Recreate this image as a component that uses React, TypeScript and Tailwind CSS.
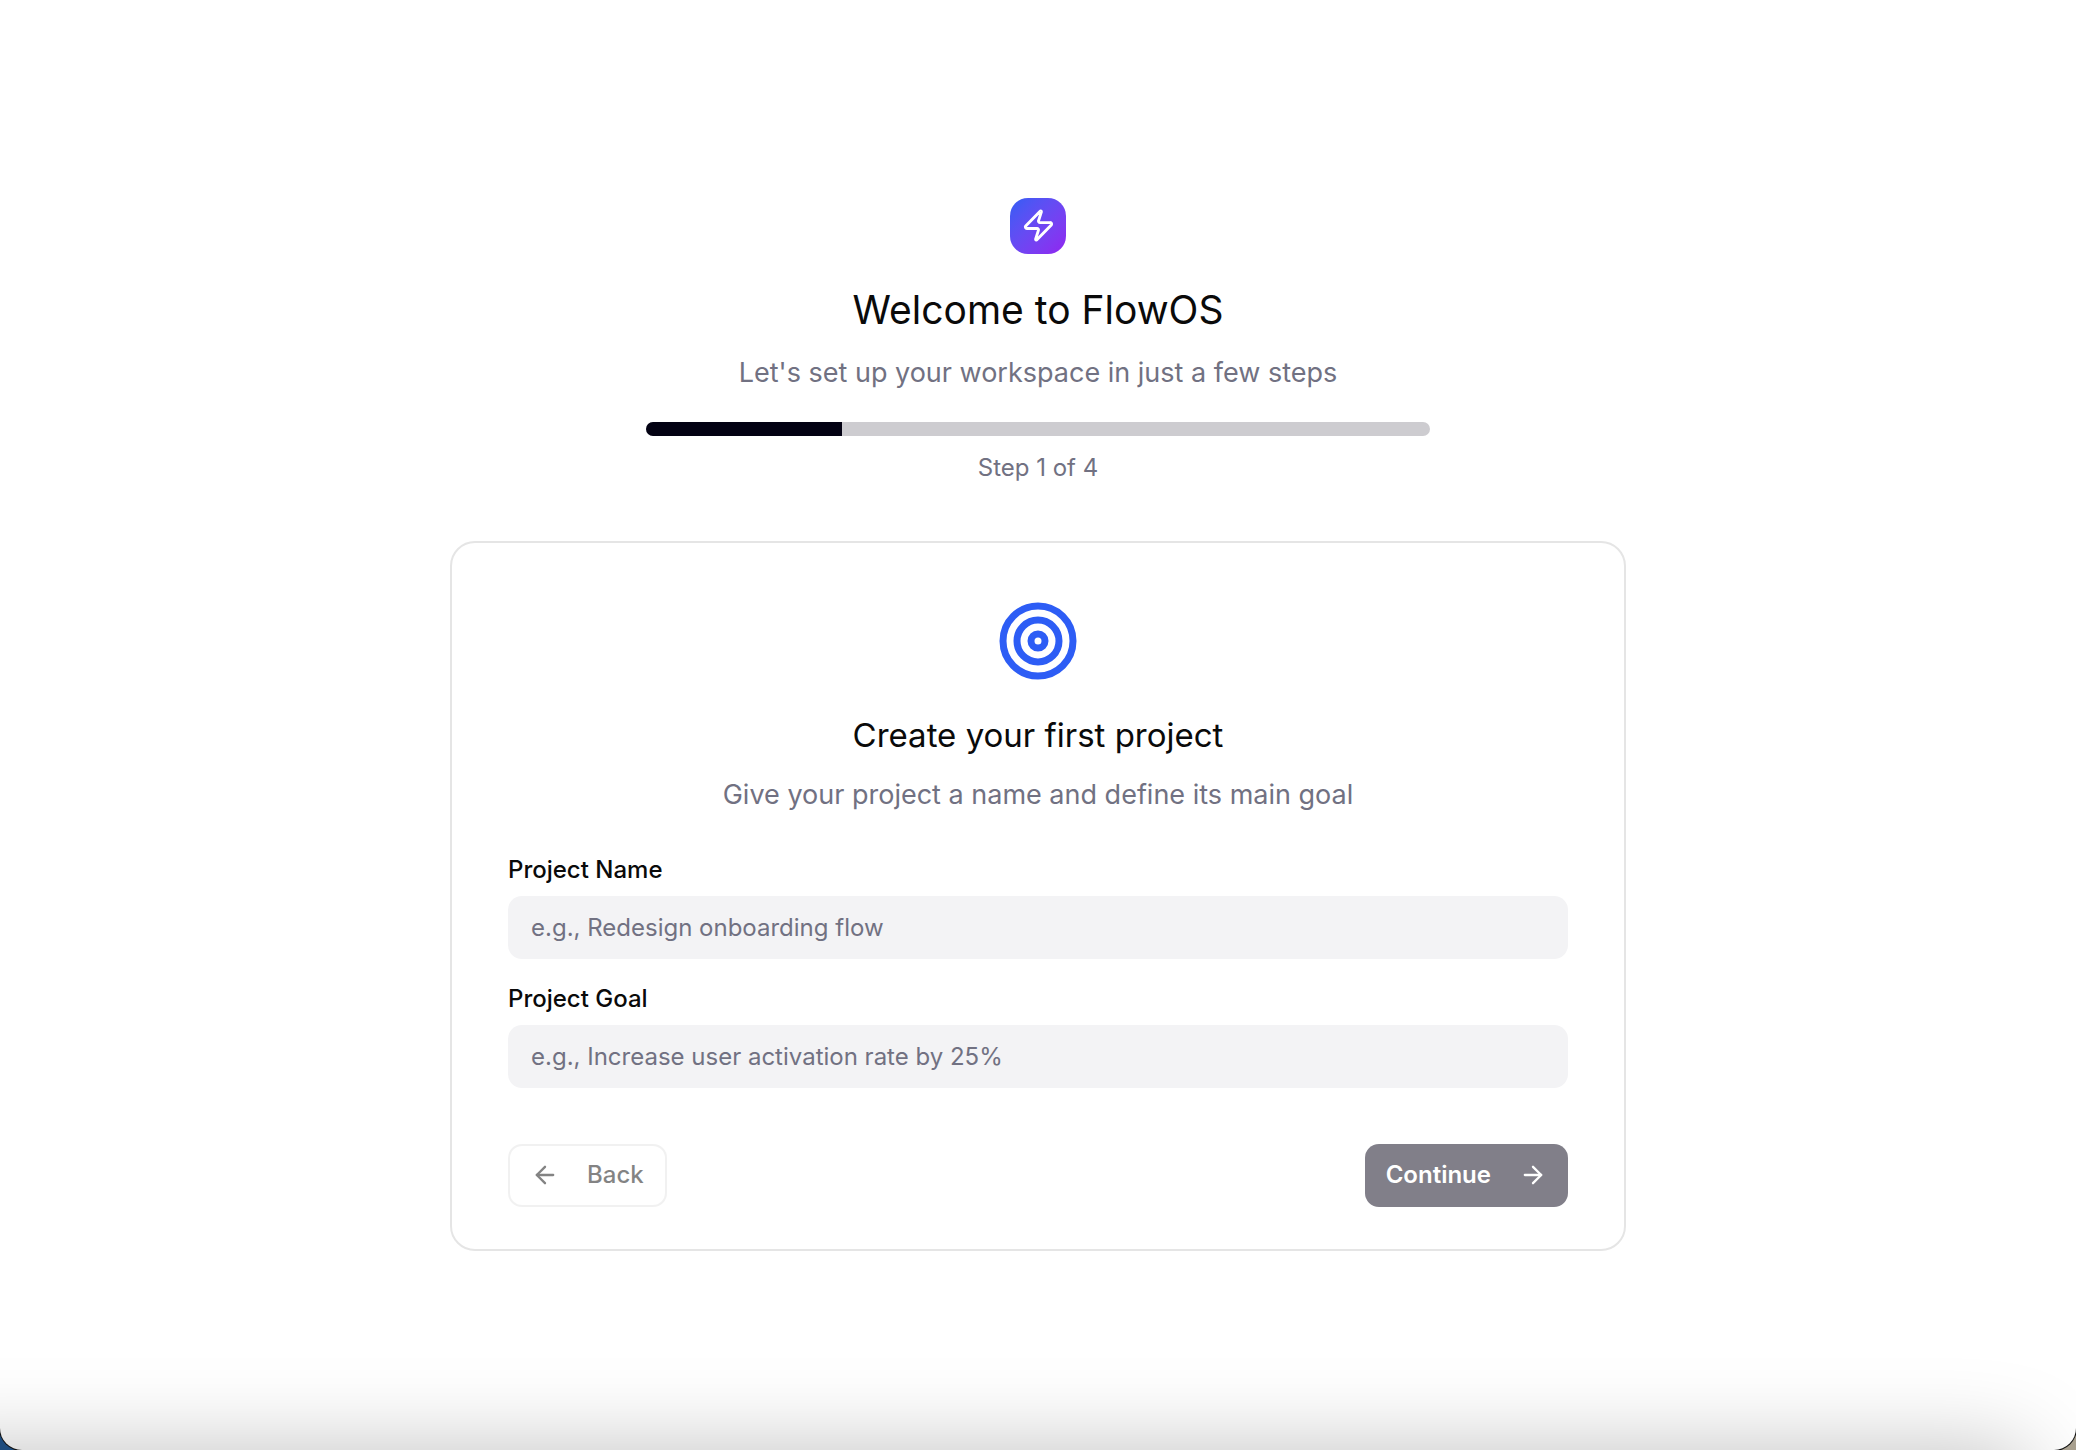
import { useState } from 'react'
import { ArrowLeft, ArrowRight, Target, Zap } from 'lucide-react'

const TOTAL_STEPS = 4

type FieldProps = {
  id: string
  label: string
  placeholder: string
  value: string
  onChange: (value: string) => void
}

function Field({ id, label, placeholder, value, onChange }: FieldProps) {
  return (
    <div className="flex flex-col gap-3.5">
      <label htmlFor={id} className="text-[24px] leading-6 font-medium text-neutral-950">
        {label}
      </label>
      <input
        id={id}
        type="text"
        value={value}
        onChange={(e) => onChange(e.target.value)}
        placeholder={placeholder}
        className="h-[63px] w-full rounded-[14px] bg-[#f3f3f5] px-[23px] text-[24px] text-neutral-950 outline-none placeholder:text-[#717182]"
      />
    </div>
  )
}

export default function App() {
  const [step, setStep] = useState(1)
  const [name, setName] = useState('')
  const [goal, setGoal] = useState('')

  const canContinue = name.trim() !== '' && goal.trim() !== ''

  return (
    <div className="bg-linear-to-r from-[#1d4b7d] from-50% to-[#a8a08f] to-50% font-['Inter','Liberation_Sans',sans-serif]">
      <div className="relative flex min-h-screen flex-col items-center justify-center overflow-hidden rounded-b-[22px] bg-white pb-0.5 shadow-[0_0_0_1px_#111]">
        <main className="flex w-full max-w-[1176px] flex-col gap-14">
          <header className="flex flex-col items-center text-center">
            <div className="flex size-14 items-center justify-center rounded-[18px] bg-linear-to-br from-[#2d5df5] to-[#9022f0]">
              <Zap className="size-[35px] text-white" />
            </div>
            <h1 className="mt-7 text-[39px] leading-14 text-neutral-950">Welcome to FlowOS</h1>
            <p className="mt-3.5 text-[27px] leading-[42px] text-[#717182]">
              Let&apos;s set up your workspace in just a few steps
            </p>
            <div
              role="progressbar"
              aria-label="Setup progress"
              aria-valuemin={0}
              aria-valuemax={TOTAL_STEPS}
              aria-valuenow={step}
              className="mt-7 h-3.5 w-full max-w-[784px] overflow-hidden rounded-full bg-[#cdccd0]"
            >
              <div className="h-full bg-[#030213]" style={{ width: `${(step / TOTAL_STEPS) * 100}%` }} />
            </div>
            <p className="mt-3.5 text-[24px] leading-[35px] text-[#717182]">
              Step {step} of {TOTAL_STEPS}
            </p>
          </header>

          <section className="rounded-[25px] border-2 border-[#e5e5e5] bg-white px-[56px] pt-14 pb-[42px]">
            <div className="flex flex-col items-center text-center">
              <Target className="size-[84px] text-[#2d5df5]" />
              <h2 className="mt-7 text-[33px] leading-[49px] text-neutral-950">Create your first project</h2>
              <p className="mt-3.5 text-[27px] leading-[42px] text-[#717182]">
                Give your project a name and define its main goal
              </p>
            </div>

            <div className="mt-[42px] flex flex-col gap-7">
              <Field
                id="project-name"
                label="Project Name"
                placeholder="e.g., Redesign onboarding flow"
                value={name}
                onChange={setName}
              />
              <Field
                id="project-goal"
                label="Project Goal"
                placeholder="e.g., Increase user activation rate by 25%"
                value={goal}
                onChange={setGoal}
              />
            </div>

            <div className="mt-14 flex justify-between">
              <button
                type="button"
                disabled={step === 1}
                onClick={() => setStep(step - 1)}
                className="flex h-[63px] items-center gap-7 rounded-[14px] border-2 border-[#e5e5e5] bg-white px-[21px] text-[24px] font-medium text-neutral-950 disabled:opacity-50"
              >
                <ArrowLeft className="size-7" />
                Back
              </button>
              <button
                type="button"
                disabled={!canContinue}
                onClick={() => setStep(Math.min(TOTAL_STEPS, step + 1))}
                className="flex h-[63px] items-center gap-7 rounded-[14px] bg-[#030213] px-[21px] text-[24px] font-semibold text-white disabled:bg-[#817f89]"
              >
                Continue
                <ArrowRight className="size-7" />
              </button>
            </div>
          </section>
        </main>

        {/* soft shade rising from the bottom edge */}
        <div className="pointer-events-none absolute top-full right-[50px] -left-[100px] h-[200px] shadow-[0_0_88px_rgba(0,0,0,0.25)]" />
      </div>
    </div>
  )
}
